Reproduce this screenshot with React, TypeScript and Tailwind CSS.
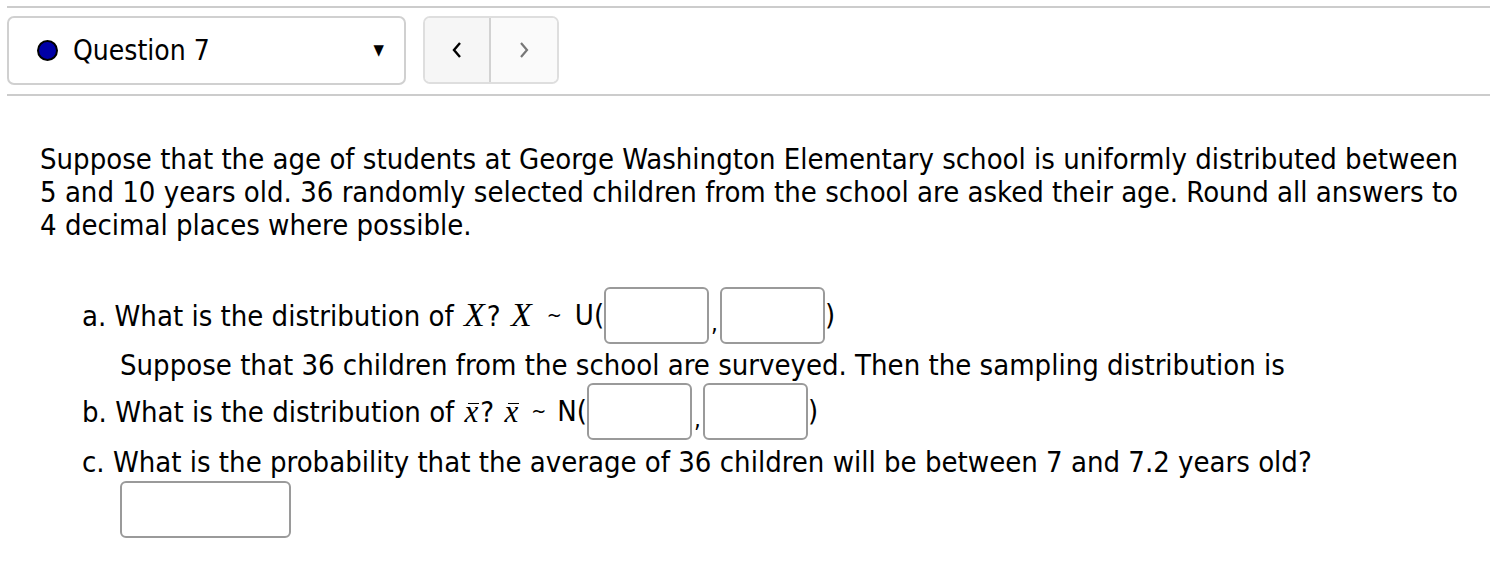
import React from 'react';

const Box = ({ w = 'w-[105px]' }: { w?: string }) => (
  <div className={`${w} h-[57px] rounded-[6px] border-2 border-[#9a9a9a] bg-white`} />
);

const serif = { fontFamily: '"Liberation Serif", "DejaVu Serif", serif' };

const MathX = () => <span className="italic text-[34px] mx-[2px]" style={serif}>X</span>;

const MathXBar = () => (
  <span className="relative inline-block italic text-[31px] mx-[2px]" style={serif}>
    x
    <span className="absolute left-[3px] top-[8px] h-[1.5px] w-[11px] bg-black" />
  </span>
);

const Tilde = ({ m }: { m: string }) => <span className={`${m} text-[20px]`}>~</span>;

export default function App() {
  return (
    <div className="w-[1490px] h-[571px] bg-white text-black overflow-hidden" style={{ fontFamily: '"DejaVu Sans Condensed", "DejaVu Sans", sans-serif' }}>
      <div className="pt-[6px] pl-[7px]">
        <div className="h-[2px] bg-[#cccccc]" />
        {/* question nav */}
        <div className="flex items-start gap-[17px] pt-[8px] pb-[9px]">
          <div className="flex items-center w-[399px] h-[69px] rounded-[7px] border-2 border-[#d0d0d0] pl-[28px] pr-[20px]">
            <span className="w-[21px] h-[21px] rounded-full bg-[#0000a6] border-2 border-black" />
            <span className="ml-[15px] text-[28px]">Question 7</span>
            <span className="ml-auto text-[15px] leading-none">▼</span>
          </div>
          <div className="flex h-[68px] rounded-[7px] border-2 border-[#dedede] overflow-hidden">
            <button className="w-[66px] bg-[#f6f6f6] border-r-2 border-[#d2d2d2] flex items-center justify-center">
              <svg width="12" height="18" viewBox="0 0 12 18" fill="none" stroke="#000" strokeWidth="2.4"><path d="M9 2L3 9l6 7" /></svg>
            </button>
            <button className="w-[66px] bg-[#fafafa] flex items-center justify-center">
              <svg width="12" height="18" viewBox="0 0 12 18" fill="none" stroke="#777" strokeWidth="2.2"><path d="M3 2l6 7-6 7" /></svg>
            </button>
          </div>
        </div>
        <div className="h-[2px] bg-[#cccccc]" />
      </div>

      <div className="pl-[40px] pt-[47px] text-[29px] leading-[33px]">
        <p className="whitespace-nowrap">
          Suppose that the age of students at George Washington Elementary school is uniformly distributed between
          <br />
          5 and 10 years old. 36 randomly selected children from the school are asked their age. Round all answers to
          <br />
          4 decimal places where possible.
        </p>

        <div className="pl-[42px] pt-[45px]">
          <div className="flex items-center">
            <span>a. What is the distribution of <MathX />? <MathX /></span>
            <Tilde m="mx-[13px]" />
            <span>U(</span>
            <Box />
            <span className="self-end mb-[4px] mx-[2px] text-[24px]">,</span>
            <Box />
            <span>)</span>
          </div>
          <div className="pl-[38px] mt-[5px]">Suppose that 36 children from the school are surveyed. Then the sampling distribution is</div>
          <div className="flex items-center mt-[1px]">
            <span>b. What is the distribution of <MathXBar />? <MathXBar /></span>
            <Tilde m="mx-[11px]" />
            <span>N(</span>
            <Box />
            <span className="self-end mb-[4px] mx-[2px] text-[24px]">,</span>
            <Box />
            <span>)</span>
          </div>
          <div className="mt-[6px]">c. What is the probability that the average of 36 children will be between 7 and 7.2 years old?</div>
          <div className="pl-[38px] mt-[2px]">
            <Box w="w-[171px]" />
          </div>
        </div>
      </div>
    </div>
  );
}
